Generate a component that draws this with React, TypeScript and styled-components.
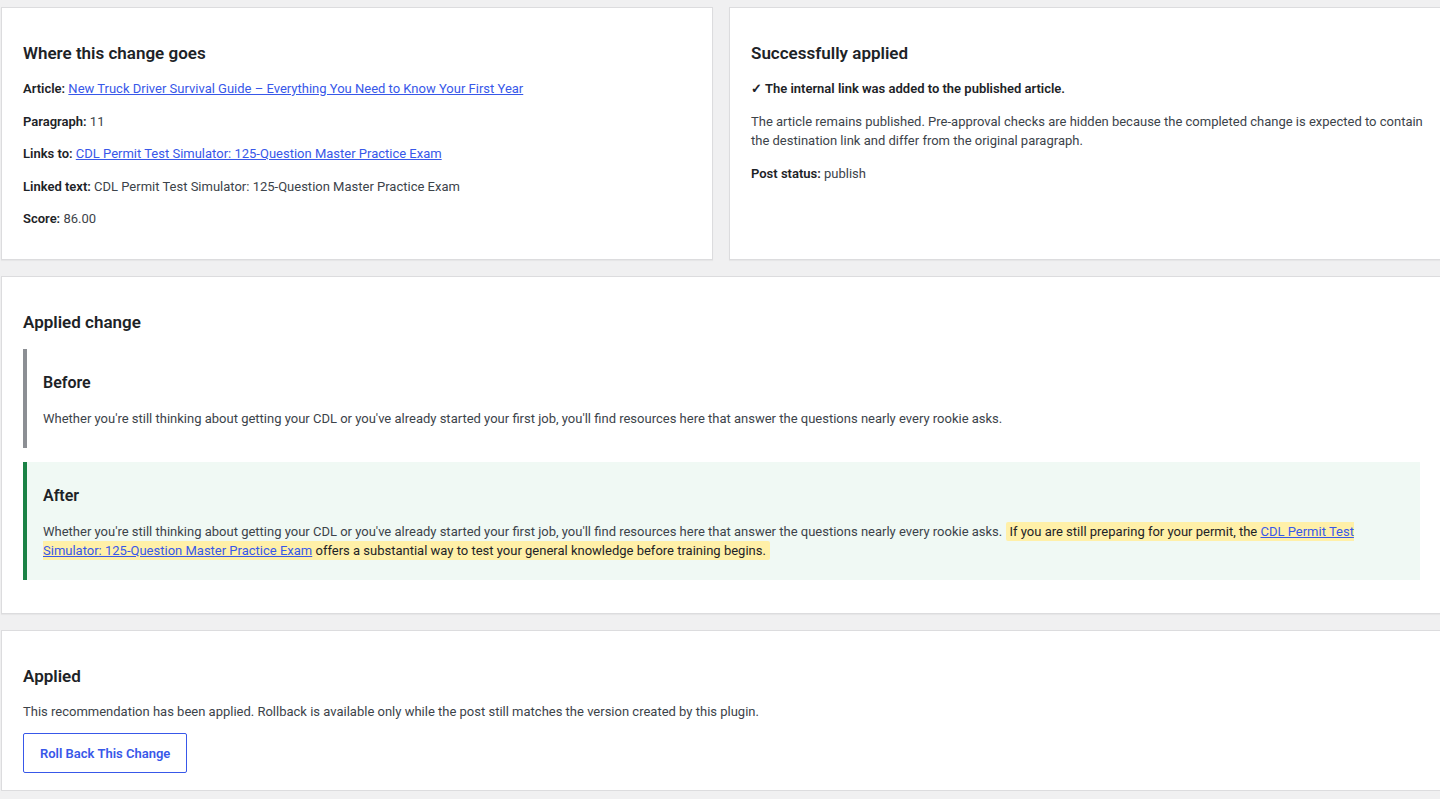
import React from "react";
import styled, { createGlobalStyle } from "styled-components";

const GlobalStyle = createGlobalStyle`
  html, body {
    margin: 0;
    padding: 0;
    background: #f0f0f1;
    overflow: hidden;
  }
  body {
    font-family: Roboto, "Noto Sans", "Liberation Sans", sans-serif;
    font-size: 13px;
    line-height: 1.5;
    color: #3c434a;
  }
`;

const Page = styled.div`
  width: 1441px;
  padding: 7px 0 0 1px;
  display: flex;
  flex-direction: column;
  gap: 16px;
`;

const TopRow = styled.div`
  display: grid;
  grid-template-columns: 712px 1fr;
  gap: 16px;
`;

const Card = styled.section<{ $clipped?: boolean }>`
  background: #fff;
  border: 1px solid #dcdcde;
  box-shadow: 0 1px 1px rgba(0, 0, 0, 0.04);
  padding: 21px ${(p) => (p.$clipped ? "14px" : "21px")} 17px 21px;
`;

const CardTitle = styled.h2`
  margin: 12px 0 0;
  font-size: 17px;
  line-height: 25px;
  font-weight: 600;
  color: #1d2327;
`;

const Field = styled.p<{ $tight?: boolean }>`
  margin: 13px 0 ${(p) => (p.$tight ? "0" : "13px")};
  line-height: 19.5px;
  &:last-child {
    margin-bottom: 13px;
  }
`;

const Label = styled.strong`
  font-weight: 600;
  color: #1d2327;
`;

const Link = styled.a`
  color: #3858e9;
  text-decoration: underline;
`;

const DiffBox = styled.div<{ $tone: "before" | "after" }>`
  margin: 14px 0 ${(p) => (p.$tone === "after" ? "16px" : "0")};
  padding: 8px 16px 7px;
  border-left: 4px solid ${(p) => (p.$tone === "after" ? "#1a8245" : "#8c8f94")};
  background: ${(p) => (p.$tone === "after" ? "#f0f9f4" : "transparent")};
`;

const DiffTitle = styled.h3`
  margin: 15px 0 15px;
  font-size: 16px;
  line-height: 22px;
  font-weight: 600;
  color: #1d2327;
`;

const DiffText = styled.p`
  margin: 0 0 13px;
  line-height: 19px;
`;

const Highlight = styled.mark`
  background: #fff0a8;
  color: #1d2327;
  padding: 2px 4px;
  border-radius: 2px;
`;

const OutlineButton = styled.button`
  display: block;
  margin-top: 12px;
  height: 40px;
  padding: 0 16px;
  background: #fff;
  border: 1px solid #3858e9;
  border-radius: 2px;
  color: #3858e9;
  font-family: inherit;
  font-size: 13px;
  font-weight: 600;
  cursor: pointer;
`;

const base =
  "Whether you're still thinking about getting your CDL or you've already started your first job, you'll find resources here that answer the questions nearly every rookie asks.";

export default function App() {
  return (
    <>
      <GlobalStyle />
      <Page>
        <TopRow>
          <Card>
            <CardTitle>Where this change goes</CardTitle>
            <Field>
              <Label>Article:</Label>{" "}
              <Link href="#">New Truck Driver Survival Guide – Everything You Need to Know Your First Year</Link>
            </Field>
            <Field>
              <Label>Paragraph:</Label> 11
            </Field>
            <Field>
              <Label>Links to:</Label>{" "}
              <Link href="#">CDL Permit Test Simulator: 125-Question Master Practice Exam</Link>
            </Field>
            <Field>
              <Label>Linked text:</Label> CDL Permit Test Simulator: 125-Question Master Practice Exam
            </Field>
            <Field>
              <Label>Score:</Label> 86.00
            </Field>
          </Card>
          <Card $clipped>
            <CardTitle>Successfully applied</CardTitle>
            <Field>
              <Label>✓ The internal link was added to the published article.</Label>
            </Field>
            <Field>
              The article remains published. Pre-approval checks are hidden because the completed change is
              expected to contain the destination link and differ from the original paragraph.
            </Field>
            <Field>
              <Label>Post status:</Label> publish
            </Field>
          </Card>
        </TopRow>

        <Card>
          <CardTitle>Applied change</CardTitle>
          <DiffBox $tone="before">
            <DiffTitle>Before</DiffTitle>
            <DiffText>{base}</DiffText>
          </DiffBox>
          <DiffBox $tone="after">
            <DiffTitle>After</DiffTitle>
            <DiffText>
              {base}{" "}
              <Highlight>
                If you are still preparing for your permit, the{" "}
                <Link href="#">CDL Permit Test Simulator: 125-Question Master Practice Exam</Link> offers a
                substantial way to test your general knowledge before training begins.
              </Highlight>
            </DiffText>
          </DiffBox>
        </Card>

        <Card>
          <CardTitle>Applied</CardTitle>
          <Field $tight>
            This recommendation has been applied. Rollback is available only while the post still matches the
            version created by this plugin.
          </Field>
          <OutlineButton type="button">Roll Back This Change</OutlineButton>
        </Card>
      </Page>
    </>
  );
}
